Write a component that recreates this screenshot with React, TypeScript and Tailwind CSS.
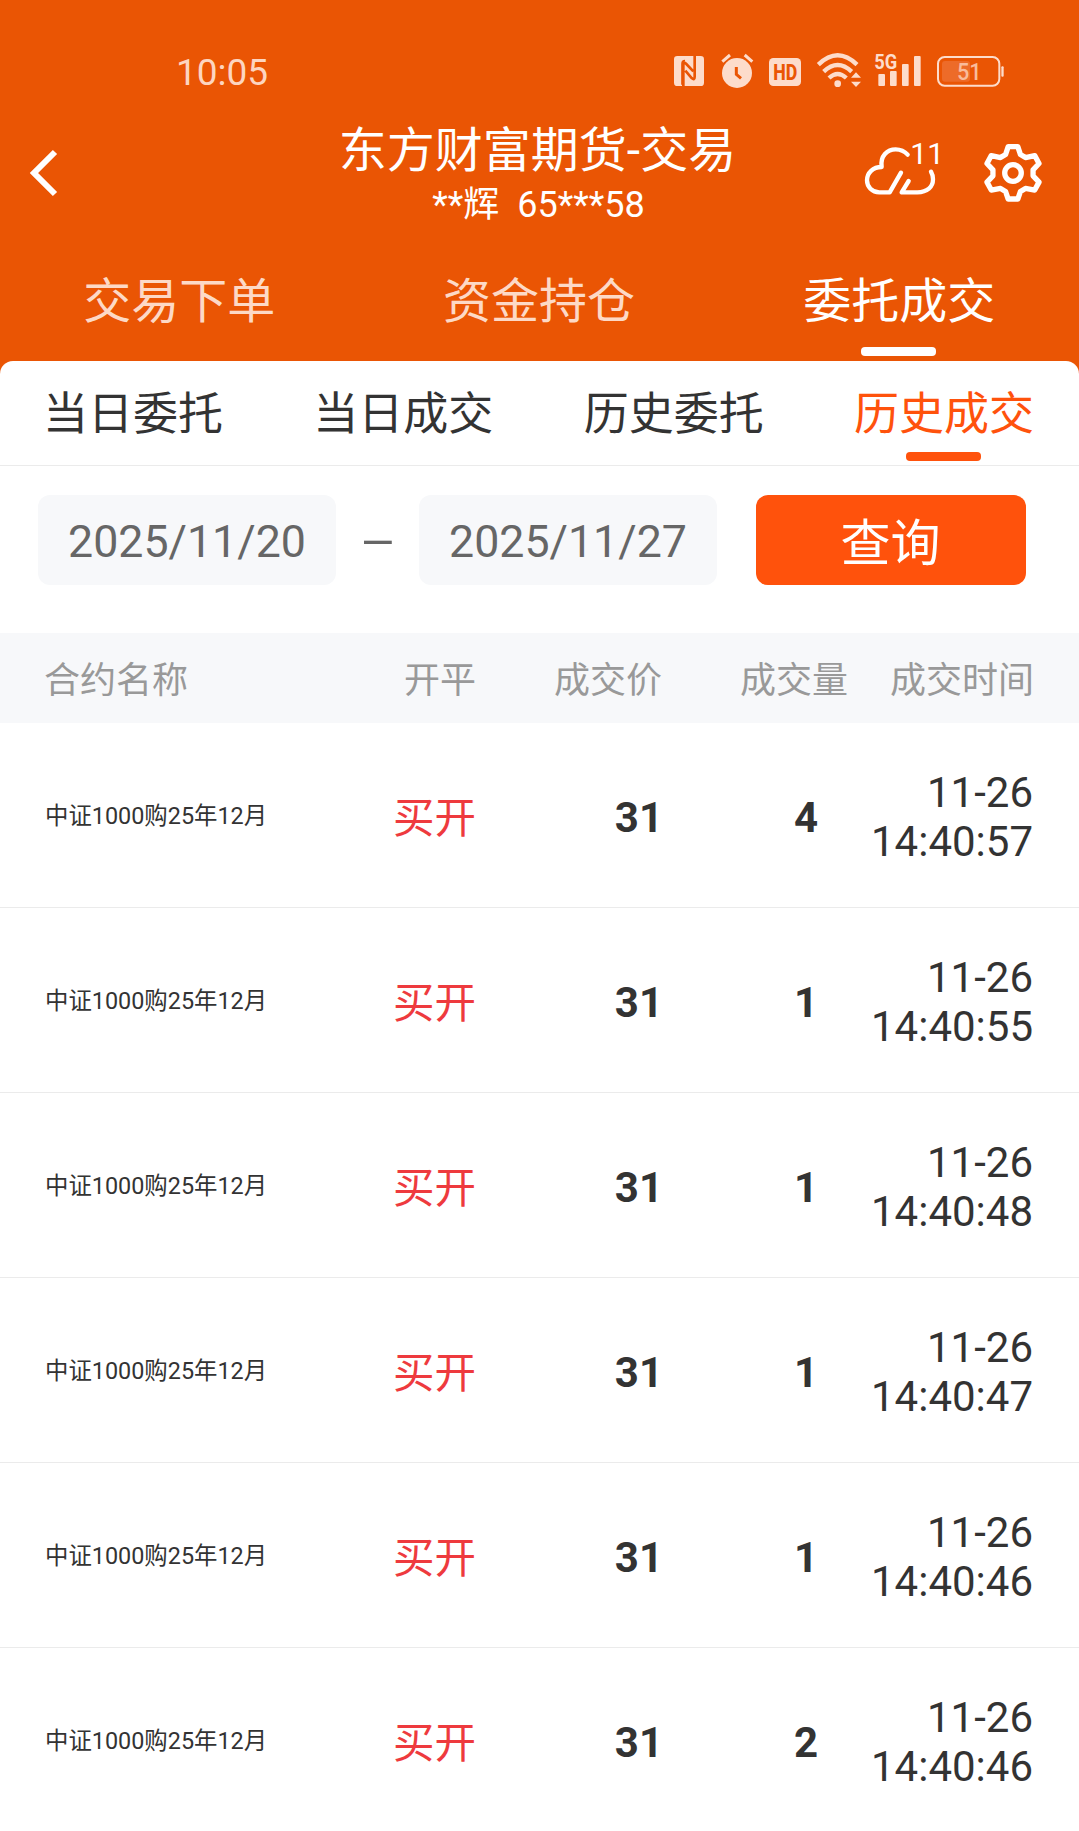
import React from "react";

const ICON = "#fddccb";

function NfcIcon() {
  return (
    <svg viewBox="36 30 120 120" className="h-[40px] w-[40px]">
      <rect x="42" y="48" width="90" height="90" rx="10" fill={ICON} />
      <path d="M70 138V76q0-12 9-4l21 22M104 48V110q0 12-9 4L76 92" fill="none" stroke="#ea5504" strokeWidth="8" />
      <path d="M66 134V72q0-10 9-10" fill="none" stroke="#ea5504" strokeWidth="5" />
    </svg>
  );
}

function AlarmIcon() {
  return (
    <svg viewBox="156 30 150 120" className="h-[40px] w-[50px]">
      <circle cx="231" cy="99" r="45" fill={ICON} />
      <path d="M187 65l23-20M277 65l-23-20" stroke={ICON} strokeWidth="9" fill="none" />
      <path d="M229 81v22l14 12" stroke="#ea5504" strokeWidth="9" fill="none" />
    </svg>
  );
}

function HdIcon() {
  return (
    <svg viewBox="306 30 138 120" className="h-[40px] w-[46px]">
      <rect x="327" y="54" width="96" height="84" rx="13" fill={ICON} />
      <text x="376" y="120" textAnchor="middle" fontFamily="Roboto, sans-serif" fontWeight="800" fontSize="67" textLength="72" lengthAdjust="spacingAndGlyphs" fill="#ea5504">HD</text>
    </svg>
  );
}

function WifiIcon() {
  return (
    <svg viewBox="444 30 180 120" className="h-[40px] w-[60px]">
      <g fill="none" stroke={ICON} strokeWidth="13">
        <path d="M475 74Q533 18 591 74" />
        <path d="M491 95Q533 55 575 95" />
        <path d="M507 114Q533 90 559 114" />
      </g>
      <circle cx="533" cy="131" r="10" fill={ICON} />
      <path d="M573 113h30l-15-16zM573 125h30l-15 16z" fill={ICON} />
    </svg>
  );
}

function SignalIcon() {
  return (
    <svg viewBox="624 30 186 120" className="h-[40px] w-[62px]">
      <g fill={ICON}>
        <text x="643" y="86" fontFamily="Roboto, sans-serif" fontWeight="700" fontSize="59" textLength="69" lengthAdjust="spacingAndGlyphs">5G</text>
        <rect x="655" y="102" width="20" height="36" rx="3" />
        <rect x="690" y="93" width="20" height="45" rx="3" />
        <rect x="726" y="72" width="20" height="66" rx="3" />
        <rect x="762" y="48" width="20" height="90" rx="3" />
      </g>
    </svg>
  );
}

function BatteryIcon() {
  return (
    <svg viewBox="810 30 240 120" className="h-[40px] w-[80px]">
      <rect x="834" y="51" width="184" height="86" rx="20" fill="none" stroke={ICON} strokeWidth="6" />
      <rect x="846" y="63" width="84" height="62" rx="9" fill="#ed6b29" />
      <rect x="1024" y="79" width="7" height="31" rx="3" fill={ICON} />
      <text x="928" y="121" textAnchor="middle" fontFamily="Roboto, sans-serif" fontWeight="500" fontSize="73" textLength="74" lengthAdjust="spacingAndGlyphs" fill="#f9bb9b">51</text>
    </svg>
  );
}

function CloudIcon() {
  return (
    <svg viewBox="66 48 252 198" className="-mr-[4px] h-[66px] w-[84px]">
      <g fill="none" stroke="#fff" strokeWidth="13" strokeLinecap="round" strokeLinejoin="round">
        <path d="M183 158L149 217H118C96 217 81 200 81 181C81 158 99 141 125 141C120 108 142 88 167 88C183 88 194 94 203 104" />
        <path d="M206 183L185 217H232C262 217 279 201 279 178C279 169 277 162 273 155" />
      </g>
      <text x="211" y="131" fontFamily="Roboto, sans-serif" fontSize="90" fill="#fff">11</text>
    </svg>
  );
}

function GearIcon() {
  return (
    <svg viewBox="426 66 187 187" className="h-[62px] w-[62px]">
      <g fill="none" stroke="#fff" strokeWidth="16" strokeLinejoin="round">
        <path d="M505 80H534L542 104L557 113L585 107L598 131L580 150V168L598 187L585 211L557 206L542 215L534 238H505L497 215L482 206L454 211L441 187L459 168V150L441 131L454 107L482 113L497 104Z" />
        <circle cx="519.500" cy="159.500" r="25" />
      </g>
    </svg>
  );
}

const rows = [
  { qty: 4, time: "14:40:57" },
  { qty: 1, time: "14:40:55" },
  { qty: 1, time: "14:40:48" },
  { qty: 1, time: "14:40:47" },
  { qty: 1, time: "14:40:46" },
  { qty: 2, time: "14:40:46" },
];

function Header() {
  return (
    <header className="h-[361px] bg-[#ea5504] text-white">
      <div className="flex h-[106px] items-start justify-between pt-[50px] pr-[69px] pl-[176px]">
        <div className="text-[37px] leading-[45px] font-[450] text-[#fdd5c0]">10:05</div>
        <div className="flex">
          <NfcIcon />
          <AlarmIcon />
          <HdIcon />
          <WifiIcon />
          <SignalIcon />
          <BatteryIcon />
        </div>
      </div>
      <div className="grid h-[134px] grid-cols-[240px_1fr_240px] items-center">
        <svg viewBox="0 0 30 48" className="ml-[29px] h-[48px] w-[30px]">
          <path d="M26 3L5 24L26 45" fill="none" stroke="#fff" strokeWidth="6" />
        </svg>
        <div className="-ml-[4px] pt-[9px] text-center">
          <h1 className="text-[48px] leading-[56px]">东方财富期货-交易</h1>
          <div className="pl-[2px] text-[36px] leading-[53px] whitespace-pre">**辉  65***58</div>
        </div>
        <div className="flex items-center justify-between pr-[35px] pl-[23px]">
          <div className="pb-[8px]"><CloudIcon /></div>
          <GearIcon />
        </div>
      </div>
      <nav className="grid grid-cols-3 text-center text-[48px] leading-[56px]">
        {["交易下单", "资金持仓", "委托成交"].map((t, i) => (
          <div key={t} className={i === 2 ? "flex flex-col items-center pt-[34px]" : "flex flex-col items-center pt-[34px] pr-px text-[#fdd9c6]"}>
            {t}
            {i === 2 && <div className="mt-[17px] mr-px h-[9px] w-[75px] rounded-[4px] bg-white" />}
          </div>
        ))}
      </nav>
    </header>
  );
}

export default function App() {
  return (
    <div className="h-[1831px] w-[1079px] overflow-hidden bg-[#ea5504] font-[Roboto,'Noto_Sans_CJK_SC',sans-serif] text-[#333]">
      <Header />
      <main className="rounded-t-[13px] bg-white">
        <nav className="flex h-[105px] justify-between border-b border-[#ebebeb] pr-[45px] pl-[43px] pt-[26px] text-[45px] leading-[56px]">
          {["当日委托", "当日成交", "历史委托", "历史成交"].map((t, i) => (
            <div key={t} className={i === 3 ? "flex flex-col items-center text-[#ff520c]" : "flex flex-col items-center"}>
              {t}
              {i === 3 && <div className="mt-[9px] h-[9px] w-[75px] rounded-[4px] bg-[#ff520c]" />}
            </div>
          ))}
        </nav>
        <div className="flex h-[167px] items-start pt-[29px] pl-[38px] text-[44.700px] leading-[94px] text-[#666]">
          <div className="h-[90px] w-[298px] rounded-[12px] bg-[#f7f8fa] text-center">2025/11/20</div>
          <div className="w-[83px] scale-x-[1.27] pl-px text-center leading-[96px]">–</div>
          <div className="h-[90px] w-[298px] rounded-[12px] bg-[#f7f8fa] text-center">2025/11/27</div>
          <button className="ml-[39px] h-[90px] w-[270px] rounded-[12px] bg-[#ff520c] pr-px text-[50px] leading-[98px] text-white">查询</button>
        </div>
        <div className="grid h-[90px] grid-cols-[232px_200px_186px_186px_186px] bg-[#f7f8fa] pl-[44px] text-right text-[36px] leading-[96px] text-[#999]">
          <div className="text-left">合约名称</div>
          <div>开平</div>
          <div>成交价</div>
          <div>成交量</div>
          <div>成交时间</div>
        </div>
        {rows.map((r, i) => (
          <div key={i} className="grid h-[185px] grid-cols-[231px_200px_187px_155px_215px] items-center border-b border-[#ebebeb] pl-[45px] text-right text-[42px] leading-[49px]">
            <div className="pt-px text-left text-[23.400px] leading-[28px] whitespace-nowrap">中证1000购25年12月</div>
            <div className="pt-[6px] text-[41.500px] text-[#ee3a3e]">买开</div>
            <div className="pt-[4px] font-bold">31</div>
            <div className="pt-[4px] font-bold">{r.qty}</div>
            <div className="pt-[4px]">
              <div>11-26</div>
              <div>{r.time}</div>
            </div>
          </div>
        ))}
      </main>
    </div>
  );
}
